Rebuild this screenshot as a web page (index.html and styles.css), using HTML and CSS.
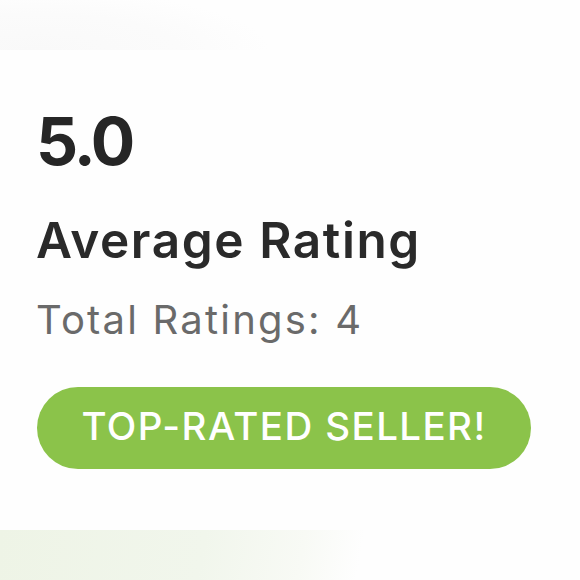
FILE: index.html
```html
<!DOCTYPE html>
<html>
<head>
<meta charset="utf-8">
<link rel="stylesheet" href="styles.css">
</head>
<body>
<div class="page">
  <div class="top-strip"></div>
  <section class="rating">
    <div class="score">5.0</div>
    <div class="label">Average Rating</div>
    <div class="total">Total Ratings: 4</div>
    <div class="badge">TOP-RATED SELLER!</div>
  </section>
  <div class="bottom-strip"></div>
</div>
</body>
</html>
```
FILE: styles.css
```css
html, body {
  margin: 0;
  padding: 0;
  background: #fefefe;
}
.page {
  width: 580px;
  height: 580px;
  display: flex;
  flex-direction: column;
  font-family: Inter, "Liberation Sans", sans-serif;
}
.top-strip {
  height: 50px;
  background: radial-gradient(ellipse 230px 60px at 40px 50px, #f9f9f9 0%, #fbfbfb 60%, rgba(254,254,254,0) 100%);
}
.rating {
  flex: 1;
  padding-left: 36px;
  display: flex;
  flex-direction: column;
  align-items: flex-start;
}
.score {
  margin-top: 58px;
  font-size: 66px;
  line-height: 66px;
  font-weight: 700;
  color: #262626;
  letter-spacing: -3px;
}
.label {
  margin-top: 41px;
  font-size: 49.5px;
  line-height: 50px;
  font-weight: 600;
  color: #2a2a2a;
  letter-spacing: 1.6px;
}
.total {
  margin-top: 35px;
  font-size: 40px;
  line-height: 40px;
  font-weight: 400;
  color: #6a6a6a;
  letter-spacing: 2.2px;
}
.badge {
  margin-top: 47px;
  margin-left: 1px;
  box-sizing: border-box;
  width: 494px;
  height: 82px;
  padding-bottom: 4px;
  border-radius: 41px;
  background: #8bc34a;
  color: #ffffff;
  font-size: 38.5px;
  font-weight: 500;
  letter-spacing: 1.4px;
  display: flex;
  align-items: center;
  justify-content: center;
}
.bottom-strip {
  height: 50px;
  background: linear-gradient(100deg, #eef4e6 0%, #f1f6ec 35%, #f8faf5 52%, rgba(254,254,254,0) 62%);
}
```
